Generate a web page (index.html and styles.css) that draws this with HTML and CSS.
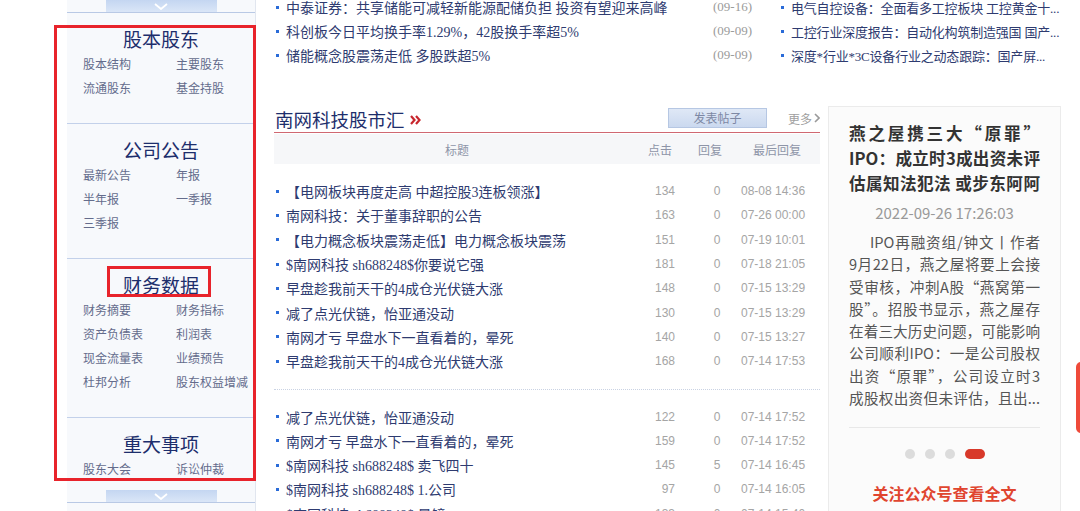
FILE: index.html
```html
<!DOCTYPE html>
<html lang="zh-CN">
<head>
<meta charset="utf-8">
<title>南网科技</title>
<link rel="stylesheet" href="styles.css">
</head>
<body>
<div class="page">
  <aside class="sidebar">
    <div class="scroll-btn"><span class="btn"><svg width="14" height="7" viewBox="0 0 14 7"><polyline points="1,1 7,6 13,1" fill="none" stroke="#fff" stroke-width="1.8"/></svg></span></div>
    <div class="scroll-area">
      <section class="sec">
        <h3 class="sec-title">股本股东</h3>
        <ul class="links"><li>股本结构</li><li>主要股东</li><li>流通股东</li><li>基金持股</li></ul>
      </section>
      <section class="sec">
        <h3 class="sec-title">公司公告</h3>
        <ul class="links"><li>最新公告</li><li>年报</li><li>半年报</li><li>一季报</li><li>三季报</li></ul>
      </section>
      <section class="sec">
        <h3 class="sec-title">财务数据</h3>
        <ul class="links"><li>财务摘要</li><li>财务指标</li><li>资产负债表</li><li>利润表</li><li>现金流量表</li><li>业绩预告</li><li>杜邦分析</li><li>股东权益增减</li></ul>
      </section>
      <section class="sec">
        <h3 class="sec-title">重大事项</h3>
        <ul class="links"><li>股东大会</li><li>诉讼仲裁</li></ul>
      </section>
    </div>
    <div class="scroll-btn bottom"><span class="btn"><svg width="14" height="7" viewBox="0 0 14 7"><polyline points="1,1 7,6 13,1" fill="none" stroke="#fff" stroke-width="1.8"/></svg></span></div>
  </aside>

  <main class="main">
    <div class="news">
      <ul class="news-col">
        <li><span class="t">中泰证券：共享储能可减轻新能源配储负担 投资有望迎来高峰</span><span class="d">(09-16)</span></li>
        <li><span class="t">科创板今日平均换手率1.29%，42股换手率超5%</span><span class="d">(09-09)</span></li>
        <li><span class="t">储能概念股震荡走低 多股跌超5%</span><span class="d">(09-09)</span></li>
      </ul>
      <ul class="news-col side">
        <li><span class="t">电气自控设备：全面看多工控板块 工控黄金十...</span></li>
        <li><span class="t">工控行业深度报告：自动化构筑制造强国 国产...</span></li>
        <li><span class="t">深度*行业*3C设备行业之动态跟踪：国产屏...</span></li>
      </ul>
    </div>

    <div class="lower">
      <div class="forum">
        <div class="fhead">
          <h2 class="ftitle">南网科技股市汇</h2>
          <svg class="arrows" width="12" height="10" viewBox="0 0 12 10"><polyline points="1,1 4.5,5 1,9" fill="none" stroke="#c8262d" stroke-width="2.2"/><polyline points="6,1 9.5,5 6,9" fill="none" stroke="#c8262d" stroke-width="2.2"/></svg>
          <span class="post-btn">发表帖子</span>
          <span class="more">更多<svg width="6" height="10" viewBox="0 0 6 10"><polyline points="1,1 5,5 1,9" fill="none" stroke="#9a9a9a" stroke-width="1.6"/></svg></span>
        </div>
        <div class="thead"><span>标题</span><span>点击</span><span>回复</span><span>最后回复</span></div>

        <div class="rows">
          <div class="row"><span class="t">【电网板块再度走高 中超控股3连板领涨】</span><span class="n">134</span><span class="n r">0</span><span class="n d">08-08 14:36</span></div>
          <div class="row"><span class="t">南网科技：关于董事辞职的公告</span><span class="n">163</span><span class="n r">0</span><span class="n d">07-26 00:00</span></div>
          <div class="row"><span class="t">【电力概念板块震荡走低】电力概念板块震荡</span><span class="n">151</span><span class="n r">0</span><span class="n d">07-19 10:01</span></div>
          <div class="row"><span class="t">$南网科技 sh688248$你要说它强</span><span class="n">181</span><span class="n r">0</span><span class="n d">07-18 21:05</span></div>
          <div class="row"><span class="t">早盘趁我前天干的4成仓光伏链大涨</span><span class="n">148</span><span class="n r">0</span><span class="n d">07-15 13:29</span></div>
          <div class="row"><span class="t">减了点光伏链，怡亚通没动</span><span class="n">130</span><span class="n r">0</span><span class="n d">07-15 13:29</span></div>
          <div class="row"><span class="t">南网才亏 早盘水下一直看着的，晕死</span><span class="n">140</span><span class="n r">0</span><span class="n d">07-15 13:27</span></div>
          <div class="row"><span class="t">早盘趁我前天干的4成仓光伏链大涨</span><span class="n">168</span><span class="n r">0</span><span class="n d">07-14 17:53</span></div>
        </div>
        <div class="sep"></div>
        <div class="rows second">
          <div class="row"><span class="t">减了点光伏链，怡亚通没动</span><span class="n">122</span><span class="n r">0</span><span class="n d">07-14 17:52</span></div>
          <div class="row"><span class="t">南网才亏 早盘水下一直看着的，晕死</span><span class="n">159</span><span class="n r">0</span><span class="n d">07-14 17:52</span></div>
          <div class="row"><span class="t">$南网科技 sh688248$ 卖飞四十</span><span class="n">145</span><span class="n r">5</span><span class="n d">07-14 16:45</span></div>
          <div class="row"><span class="t">$南网科技 sh688248$ 1.公司</span><span class="n">97</span><span class="n r">0</span><span class="n d">07-14 16:05</span></div>
          <div class="row"><span class="t">$南网科技 sh688248$ 晕镜</span><span class="n">133</span><span class="n r">0</span><span class="n d">07-14 15:40</span></div>
        </div>
      </div>

      <article class="card">
        <h1 class="ctitle"><span>燕之屋携三大“原罪”</span><span>IPO：成立时3成出资未评</span><span>估属知法犯法 或步东阿阿</span></h1>
        <div class="cdate">2022-09-26 17:26:03</div>
        <p class="cbody">
          <span class="first">IPO再融资组/钟文丨作者</span>
          <span>9月22日，燕之屋将要上会接</span>
          <span>受审核，冲刺A股“燕窝第一</span>
          <span>股”。招股书显示，燕之屋存</span>
          <span>在着三大历史问题，可能影响</span>
          <span>公司顺利IPO：一是公司股权</span>
          <span>出资“原罪”，公司设立时3</span>
          <span>成股权出资但未评估，且出...</span>
        </p>
        <div class="cline"></div>
        <div class="dots"><i></i><i></i><i></i><i class="on"></i></div>
        <div class="follow">关注公众号查看全文</div>
      </article>
    </div>
  </main>

  <div class="annot"></div>
  <div class="annot small"></div>
  <div class="side-tab"></div>
</div>
</body>
</html>
```

FILE: styles.css
```css
* { box-sizing: border-box; }
html, body { margin: 0; padding: 0; }
body {
  width: 1080px;
  height: 511px;
  overflow: hidden;
  background: #fff;
  font-family: "Noto Sans CJK SC", sans-serif;
}
ul { list-style: none; margin: 0; padding: 0; }
h1, h2, h3, p { margin: 0; font-weight: normal; }

.page { position: relative; display: flex; height: 511px; }

/* sidebar */
.sidebar {
  margin-left: 67px;
  width: 189px;
  flex: none;
  background: #f7f9fc;
  border-right: 1px solid #e1e6ef;
  display: flex;
  flex-direction: column;
}
.scroll-btn {
  height: 13px;
  border-bottom: 1px solid #b9c9e5;
  display: flex;
  justify-content: center;
  flex: none;
}
.scroll-btn.bottom { margin-top: 1px; }
.btn {
  width: 111px;
  height: 12px;
  background: linear-gradient(#c4d6f1, #dae6f7);
  display: flex;
  align-items: center;
  justify-content: center;
}
.scroll-area { height: 476px; overflow: hidden; flex: none; }
.sec { padding: 14px 0 23px; border-bottom: 1px solid #c3d1ea; }
.sec-title {
  font-size: 19px;
  line-height: 24px;
  color: #1d2e6c;
  text-align: center;
  margin-bottom: 1px;
}
.links {
  display: grid;
  grid-template-columns: 93px 1fr;
  padding-left: 16px;
  font-size: 12px;
  line-height: 24px;
  color: #646c8c;
  white-space: nowrap;
}

/* main */
.main { margin-left: 18px; width: 787px; flex: none; }
.news {
  display: grid;
  grid-template-columns: 486px 1fr;
  column-gap: 19px;
  margin-top: -5px;
}
.news li, .row .t {
  display: flex;
  align-items: center;
  font-family: "Liberation Serif", "Noto Sans CJK SC", serif;
  font-size: 14px;
  color: #2e3b70;
  white-space: nowrap;
}
.news li { height: 24px; }
.news .side li { font-size: 13px; letter-spacing: -0.2px; }
.news li::before, .row .t::before {
  content: "";
  width: 3px;
  height: 3px;
  background: #2a6bd8;
  margin: 0 7px 0 2px;
  flex: none;
}
.news .t { flex: 1; }
.news .d { color: #9b9b9b; font-size: 13px; padding-right: 8px; }

.lower { display: flex; margin-top: 39px; }
.forum { width: 546px; flex: none; }
.fhead {
  display: flex;
  align-items: center;
  height: 27px;
  border-bottom: 1px solid #d06872;
}
.ftitle { font-size: 18.5px; line-height: 26px; color: #1d2e6c; padding-left: 1px; }
.arrows { margin-left: 5px; margin-top: 2px; }
.post-btn {
  margin-left: auto;
  margin-top: -3px;
  width: 99px;
  height: 20px;
  background: linear-gradient(#dfe8f6, #cbd9ef);
  border: 1px solid #b6c7e3;
  font-size: 12px;
  line-height: 18px;
  color: #7d88a4;
  text-align: center;
}
.more {
  margin-left: 21px;
  width: 32px;
  font-size: 12px;
  color: #a0a0a0;
  display: flex;
  align-items: center;
  gap: 2px;
  margin-top: -2px;
}
.thead, .row {
  display: grid;
  grid-template-columns: 366px 40px 60px 74px;
}
.thead {
  height: 30px;
  margin-top: 1px;
  background: #f6f7f9;
  align-items: center;
  font-size: 12px;
  color: #8e95a8;
  text-align: center;
}
.rows { margin-top: 15px; }
.rows.second { margin-top: 14px; }
.row { height: 24.3px; align-items: center; }
.row .n {
  font-family: "Liberation Sans", sans-serif;
  font-size: 12px;
  color: #a5a5a5;
  text-align: right;
  padding-right: 5px;
}
.row .n.r { text-align: center; padding: 0 0 0 14px; }
.row .n.d { text-align: left; padding: 0 0 0 1px; }
.sep { border-top: 1px dotted #c9d2e3; margin-top: 16px; }

/* card */
.card {
  margin-left: 8px;
  width: 233px;
  height: 440px;
  flex: none;
  background: #fbfbfb;
  border: 1px solid #ebebeb;
  padding: 14px 20px 0 20px;
}
.ctitle { font-size: 16.6px; font-weight: bold; line-height: 25px; color: #333; }
.ctitle span, .cbody span {
  display: block;
  text-align: justify;
  text-align-last: justify;
}
.cdate {
  margin-top: 5px;
  font-size: 15px;
  line-height: 24px;
  color: #999;
  text-align: center;
}
.cbody {
  margin-top: 6px;
  font-size: 14.6px;
  line-height: 22.3px;
  color: #555;
}
.cbody .first { padding-left: 21px; }
.cline { margin-top: 18px; border-top: 1px solid #e8e8e8; }
.dots {
  margin-top: 21px;
  display: flex;
  justify-content: center;
  gap: 10px;
  height: 10px;
}
.dots i { width: 10px; height: 10px; border-radius: 50%; background: #dcdcdc; }
.dots i.on { width: 20px; border-radius: 5px; background: #d8392a; }
.follow {
  margin-top: 23px;
  font-size: 16px;
  font-weight: bold;
  line-height: 22px;
  color: #e0452f;
  text-align: center;
}

/* overlays */
.annot {
  position: absolute;
  left: 54px;
  top: 25px;
  width: 202px;
  height: 456px;
  border: 3px solid #e8232b;
}
.annot.small { left: 107px; top: 266px; width: 104px; height: 31px; }
.side-tab {
  position: absolute;
  left: 1076px;
  top: 362px;
  width: 12px;
  height: 71px;
  border-radius: 5px;
  background: #ef4a3a;
}
```
